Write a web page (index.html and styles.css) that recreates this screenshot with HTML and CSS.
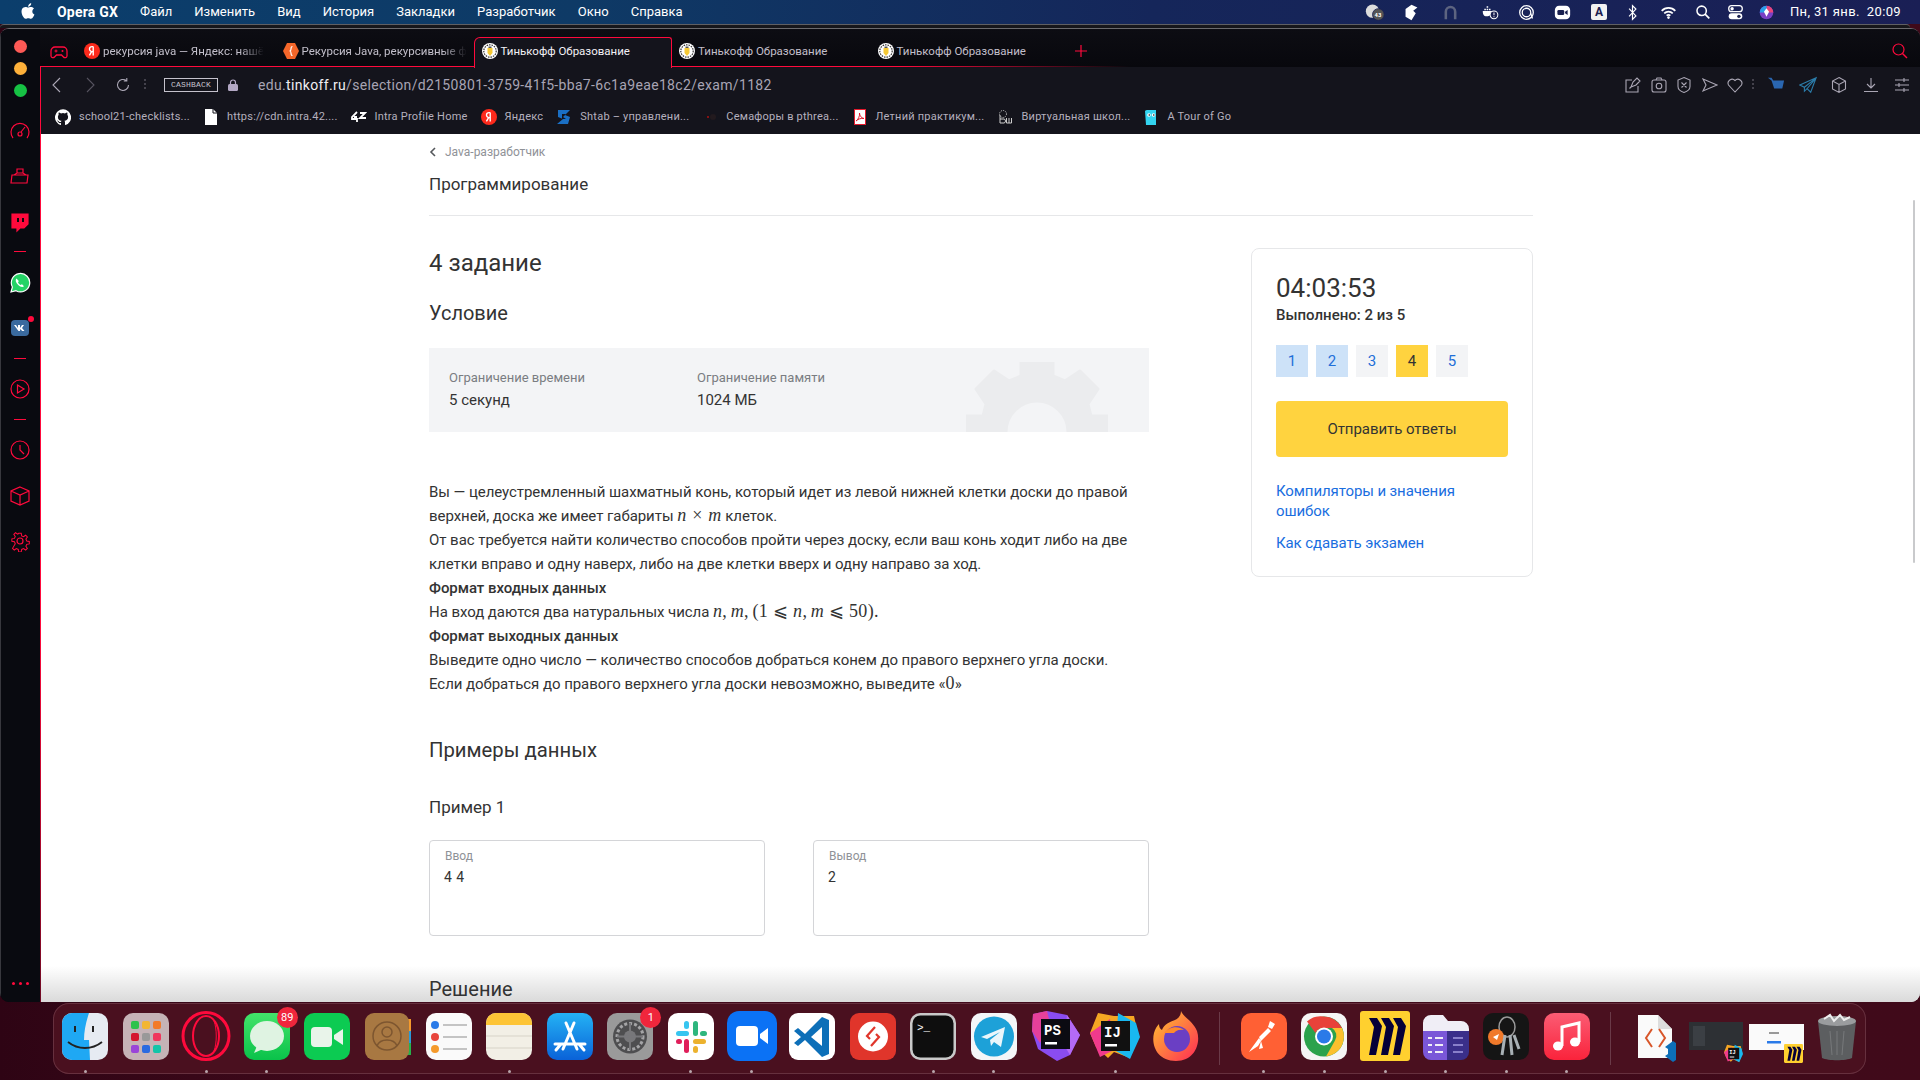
FILE: index.html
```html
<!DOCTYPE html>
<html lang="ru">
<head>
<meta charset="utf-8">
<title>Тинькофф Образование</title>
<link rel="stylesheet" href="styles.css">
</head>
<body>
<svg class="defs" width="0" height="0">
  <defs>
    <symbol id="i-ya" viewBox="0 0 16 16"><circle cx="8" cy="8" r="8" fill="#fc2a1c"/><path d="M9.2 3.6v8.8M9.2 3.6H8a2.4 2.4 0 0 0 0 5h1.2M7.6 8.6l-2.2 3.8" fill="none" stroke="#fff" stroke-width="1.4"/></symbol>
    <symbol id="i-tk" viewBox="0 0 16 16"><circle cx="8" cy="8" r="8" fill="#fff"/><circle cx="8" cy="8" r="6.200" fill="none" stroke="#333" stroke-width="1.200" stroke-dasharray="1.500 1"/><path d="M5.500 5h5v5l-2.500 3-2.500-3z" fill="#f6c935"/><path d="M6.500 3.500h3V5h-3z" fill="#555"/></symbol>
    <symbol id="i-ij" viewBox="0 0 50 50"><path d="M8 2l16 3 20 0 4 18-8 24-16-6-6 6L6 36 0 22z" fill="#f5a623"/><path d="M28 2l18 10 4 14-10 22-14-8z" fill="#19b8f0"/><path d="M0 22l10 24 16-8-6-30z" fill="#f03a8c"/><rect x="11" y="10" width="29" height="30" fill="#111"/><text x="14" y="26" class="logo-t">IJ</text><rect x="15" y="33" width="12" height="2.500" fill="#fff"/></symbol>
    <symbol id="i-miro" viewBox="0 0 50 50"><rect width="50" height="50" rx="3" fill="#ffd02f"/><path d="M9 7h8l5 8-6 29H9l5-28zM21 7h8l5 8-6 29h-7l5-28zM33 7h8l5 8-6 29h-7l5-28z" fill="#050038"/></symbol>
  </defs>
</svg>

<header class="menubar">
  <svg class="apple" viewBox="0 0 14 16" width="14" height="16"><path d="M11.300 8.500c0-2 1.600-2.900 1.700-3-1-1.400-2.400-1.600-2.900-1.600-1.200-.1-2.400.7-3 .7s-1.600-.7-2.600-.7C3.100 3.900 1.900 4.600 1.200 5.800c-1.400 2.400-.4 6 1 8 .7 1 1.500 2 2.500 2s1.400-.6 2.600-.6 1.600.6 2.600.6 1.800-1 2.400-2c.8-1.100 1.100-2.200 1.100-2.300-.1 0-2.100-.8-2.100-3zM9.400 2.600C9.900 2 10.300 1.100 10.200.2c-.8 0-1.700.5-2.300 1.200-.5.600-.9 1.500-.8 2.300.9.100 1.800-.4 2.300-1.100z" fill="#fff"/></svg>
  <nav class="menu-left">
    <b class="appname">Opera GX</b><span>Файл</span><span>Изменить</span><span>Вид</span><span>История</span><span>Закладки</span><span>Разработчик</span><span>Окно</span><span>Справка</span>
  </nav>
  <div class="menu-right">
    <span class="tray"><svg viewBox="0 0 24 20"><circle cx="9" cy="9" r="8" fill="#ddd"/><circle cx="16" cy="13" r="7" fill="#555" stroke="#1a2050"/><text x="11.500" y="16" class="tray-t">43</text></svg></span>
    <span class="tray"><svg viewBox="0 0 20 20"><path d="M3 6l7-5 7 3-5 4 3 3-5 8-7-4z" fill="#fff"/></svg></span>
    <span class="tray"><svg viewBox="0 0 20 20"><path d="M3 18V9a7 7 0 0 1 14 0v9h-3V9a4 4 0 0 0-8 0v9z" fill="#5d6480"/></svg></span>
    <span class="tray"><svg viewBox="0 0 22 20"><path d="M1 8h12c0 4-3 7-7 7s-5-3-5-7zM3 5h2v2H3zM6 5h2v2H6zM9 5h2v2H9zM6 2h2v2H6z" fill="#fff"/><circle cx="15.500" cy="13" r="5" fill="#1a2050" stroke="#fff" stroke-width="1.300"/><path d="M15.500 10v3.500M15.500 15v1" stroke="#fff" stroke-width="1.300"/></svg></span>
    <span class="tray"><svg viewBox="0 0 20 20"><circle cx="10" cy="10" r="8" fill="none" stroke="#fff" stroke-width="1.500"/><circle cx="10" cy="10" r="5" fill="none" stroke="#fff" stroke-width="1.500"/><path d="M15 11l2 6" stroke="#fff" stroke-width="1.500"/></svg></span>
    <span class="tray"><svg viewBox="0 0 20 20"><rect x="1" y="2" width="18" height="16" rx="5" fill="#fff"/><rect x="4" y="7" width="8" height="6" rx="1.500" fill="#1a2050"/><path d="M13 9l3-2v6l-3-2z" fill="#1a2050"/></svg></span>
    <span class="tray"><b class="tray-a">A</b></span>
    <span class="tray"><svg viewBox="0 0 12 20"><path d="M2 5.500l8 8.500-4 4V2l4 4-8 8.500" fill="none" stroke="#fff" stroke-width="1.400"/></svg></span>
    <span class="tray"><svg viewBox="0 0 20 20"><path d="M2 8a11 11 0 0 1 16 0M5 11a7 7 0 0 1 10 0M7.800 13.800a3.200 3.200 0 0 1 4.400 0" fill="none" stroke="#fff" stroke-width="2"/><circle cx="10" cy="16" r="1.500" fill="#fff"/></svg></span>
    <span class="tray"><svg viewBox="0 0 20 20"><circle cx="9" cy="8" r="5.500" fill="none" stroke="#fff" stroke-width="1.800"/><path d="M13 12l5 5" stroke="#fff" stroke-width="2"/></svg></span>
    <span class="tray"><svg viewBox="0 0 20 20"><rect x="2" y="2" width="16" height="7" rx="3.500" fill="none" stroke="#fff" stroke-width="1.500"/><circle cx="6" cy="5.500" r="2" fill="#fff"/><rect x="2" y="11" width="16" height="7" rx="3.500" fill="#fff"/><circle cx="14" cy="14.500" r="2" fill="#1a2050"/></svg></span>
    <span class="tray"><svg viewBox="0 0 20 20"><circle cx="10" cy="10" r="8" fill="#7a3fc4"/><path d="M10 2a8 8 0 0 1 8 8l-8 0z" fill="#e8457a"/><path d="M2 10a8 8 0 0 1 8-8l0 8z" fill="#2a9ee8"/><path d="M7 9l3-4 3 4-3 6z" fill="#fff"/></svg></span>
    <span class="clock">Пн, 31 янв.&nbsp; 20:09</span>
  </div>
</header>

<div class="backwin"></div>

<div class="window">
  <aside class="sidebar">
    <div class="lights"><i class="l-red"></i><i class="l-yel"></i><i class="l-grn"></i></div>
    <svg class="sb-ic" viewBox="0 0 22 22"><path d="M4 18a9 9 0 1 1 14 0" /><circle cx="11" cy="14" r="2"/><path d="M12 12l4-5"/></svg>
    <svg class="sb-ic" viewBox="0 0 22 22"><path d="M3 10h16l-1 8H2zM5 10l3-2h6l3 2M8 8V4h6v4"/></svg>
    <svg class="sb-ic" viewBox="0 0 22 22"><path d="M3 3h16v10l-4 4h-4l-3 3v-3H3z" fill="#ff0a3c"/><path d="M9 7v4M14 7v4" stroke="#0a0a10" stroke-width="2"/></svg>
    <i class="sb-line"></i>
    <svg class="sb-ic sb-line-after" viewBox="0 0 22 22"><path d="M2 20l1.400-5A9.200 9.200 0 1 1 7 18.700z" fill="#25d366" stroke="#fff" stroke-width="1.200"/><path d="M7.500 6.500c-1.500 1.500-.8 4 1.500 6.200s4.500 3 6 1.500l-2-2-1.500.8c-1-.5-2-1.500-2.500-2.500l.8-1.500z" fill="#fff" stroke="none"/></svg>
    <span class="vk"><svg class="sb-ic-plain" viewBox="0 0 22 22"><rect x="2" y="3" width="18" height="16" rx="4" fill="#3a6a9e"/><path d="M5 8h2l2 3V8h2v3l2-3h2l-2 3 2.500 3h-2.200L11 12v2H9.500z" fill="#fff"/></svg><i class="vk-dot"></i></span>
    <i class="sb-line"></i>
    <svg class="sb-ic sb-line-after" viewBox="0 0 22 22"><circle cx="11" cy="11" r="9"/><path d="M8.500 7l6.500 4-6.500 4z"/></svg>
    <i class="sb-line"></i>
    <svg class="sb-ic sb-line-after" viewBox="0 0 22 22"><circle cx="11" cy="11" r="9"/><path d="M11 6v5l4 4"/></svg>
    <svg class="sb-ic" viewBox="0 0 22 22"><path d="M11 2l9 4v10l-9 4-9-4V6zM2 6l9 4 9-4M11 10v10"/></svg>
    <svg class="sb-ic" viewBox="0 0 22 22"><circle cx="11" cy="11" r="3"/><path d="M9.500 2h3l.5 3 2.200 1 2.500-1.700 2 2-1.700 2.500 1 2.200 3 .5v3l-3 .5-1 2.200 1.700 2.500-2 2-2.500-1.700-2.200 1-.5 3h-3l-.5-3-2.200-1-2.500 1.700-2-2L5.500 14.200l-1-2.200-3-.5v-3l3-.5 1-2.200L3.800 3.300l2-2 2.500 1.700 .7-.4z" transform="translate(1.600 1.600) scale(.85)"/></svg>
    <div class="sb-more"><i></i><i></i><i></i></div>
  </aside>

  <div class="main">
    <div class="tabstrip">
      <svg class="gx-ic" viewBox="0 0 18 14"><path d="M5 2h8a4 4 0 0 1 4 4l0 5a2 2 0 0 1-3.500 1L11.500 10h-5L4.500 12A2 2 0 0 1 1 11V6a4 4 0 0 1 4-4z" fill="none" stroke="#ff0a3c" stroke-width="1.300"/><path d="M4.500 6h3M6 4.500v3" stroke="#ff0a3c"/><circle cx="12.500" cy="6" r="1" fill="#ff0a3c"/></svg>
      <div class="tab"><svg class="fav"><use href="#i-ya"/></svg><span class="tab-t tab-fade">рекурсия java — Яндекс: нашё</span></div>
      <div class="tab tab-2"><svg class="fav" viewBox="0 0 16 16"><path d="M4 0h8l4 8-4 8H4L0 8z" fill="#f5672a"/><path d="M9.500 3.500C8 3.500 8 4.500 8 6s-.5 2-1.500 2c1 0 1.500.5 1.500 2s0 2.500 1.500 2.500" fill="none" stroke="#fff" stroke-width="1.200"/></svg><span class="tab-t tab-fade">Рекурсия Java, рекурсивные ф</span></div>
      <div class="tab tab-active"><svg class="fav"><use href="#i-tk"/></svg><span class="tab-t">Тинькофф Образование</span></div>
      <div class="tab"><svg class="fav"><use href="#i-tk"/></svg><span class="tab-t">Тинькофф Образование</span></div>
      <div class="tab"><svg class="fav"><use href="#i-tk"/></svg><span class="tab-t">Тинькофф Образование</span></div>
      <svg class="tab-plus" viewBox="0 0 12 12"><path d="M6 0v12M0 6h12" stroke="#ff0a3c" stroke-width="1.200"/></svg>
      <svg class="tab-search" viewBox="0 0 16 16"><circle cx="6.500" cy="6.500" r="5.500" fill="none" stroke="#ff0a3c" stroke-width="1.200"/><path d="M10.500 10.500L15 15" stroke="#ff0a3c" stroke-width="1.400"/></svg>
    </div>

    <div class="content">
      <div class="toolbar">
        <svg class="tb-back" viewBox="0 0 12 16"><path d="M9 1L2 8l7 7" class="tb-s"/></svg>
        <svg class="tb-fwd" viewBox="0 0 12 16"><path d="M3 1l7 7-7 7" class="tb-s tb-dim"/></svg>
        <svg class="tb-reload" viewBox="0 0 16 16"><path d="M13.500 8a5.500 5.500 0 1 1-2-4.300M11.800 1v3h-3" class="tb-s"/></svg>
        <span class="tb-sep"></span>
        <span class="cashback">CASHBACK</span>
        <svg class="tb-lock" viewBox="0 0 10 12"><path d="M2.500 5V3.500a2.500 2.500 0 0 1 5 0V5" fill="none" stroke="#b3a8c4" stroke-width="1.200"/><rect y="5" width="10" height="7" rx="1.500" fill="#b3a8c4"/></svg>
        <span class="url">edu.<b>tinkoff.ru</b>/selection/d2150801-3759-41f5-bba7-6c1a9eae18c2/exam/1182</span>
        <div class="tb-right">
          <svg class="tb-i" viewBox="0 0 18 18"><path d="M8 4H2v12h12v-6M7 11l2-5 4-4 3 3-4 4zM7 11l-1.500 1.500" class="tb-s"/></svg>
          <svg class="tb-i" viewBox="0 0 18 18"><rect x="2" y="4" width="14" height="12" rx="2" class="tb-s"/><circle cx="9" cy="10" r="2.800" class="tb-s"/><path d="M6 4l1-2h4l1 2" class="tb-s"/></svg>
          <svg class="tb-i" viewBox="0 0 18 18"><path d="M9 1.500l6 2.500v6.500c0 3-3 5-6 6-3-1-6-3-6-6V4zM6.500 6.500l5 5M11.500 6.500l-5 5" class="tb-s"/></svg>
          <svg class="tb-i" viewBox="0 0 18 18"><path d="M2 3l14 6-14 6 3-6z" class="tb-s"/></svg>
          <svg class="tb-i" viewBox="0 0 18 18"><path d="M9 16L2.500 9A4 4 0 0 1 9 4.500 4 4 0 0 1 15.500 9z" class="tb-s"/></svg>
          <span class="tb-sep tb-sep-r"></span>
          <svg class="tb-i tb-w" viewBox="0 0 20 18"><path d="M1 1h4l2 3h12l-2 9H8L5 4z" fill="#2a66b0"/></svg>
          <svg class="tb-i tb-w" viewBox="0 0 20 18"><path d="M19 1L1 9l5 2.500L19 1l-10 12 4 4zM6 11.500V16l3-3" fill="none" stroke="#2b7ba8" stroke-width="1.200"/></svg>
          <svg class="tb-i tb-w" viewBox="0 0 18 18"><path d="M9 1.500l6.500 3.500v8L9 16.500 2.500 13V5zM2.500 5L9 8.500 15.500 5M9 8.500v8" class="tb-s"/></svg>
          <svg class="tb-i tb-w" viewBox="0 0 18 18"><path d="M9 2v10M5 8l4 4 4-4M2 15.500h14" class="tb-s"/></svg>
          <svg class="tb-i tb-w" viewBox="0 0 18 18"><path d="M2 4h14M2 9h14M2 14h14" class="tb-s"/><path d="M11 2v4M6 7v4M11 12v4" class="tb-s"/></svg>
        </div>
      </div>

      <div class="bookmarks">
        <span class="bm"><svg class="bm-i" viewBox="0 0 16 16"><path d="M8 .3a8 8 0 0 0-2.500 15.600c.4.1.5-.2.5-.4v-1.400c-2.200.5-2.700-1-2.700-1-.4-.9-.9-1.200-.9-1.200-.7-.5.100-.5.100-.5.800.1 1.200.8 1.200.8.700 1.200 1.900.9 2.300.7.100-.5.300-.9.500-1.100-1.800-.2-3.600-.9-3.600-4 0-.9.300-1.600.8-2.100-.1-.2-.4-1 .1-2.100 0 0 .7-.2 2.200.8a7.500 7.500 0 0 1 4 0c1.500-1 2.200-.8 2.200-.8.400 1.100.2 1.900.1 2.100.5.600.8 1.300.8 2.100 0 3.100-1.900 3.800-3.700 4 .3.300.6.800.6 1.500v2.200c0 .2.100.5.600.4A8 8 0 0 0 8 .3z" fill="#fff"/></svg>school21-checklists...</span>
        <span class="bm"><svg class="bm-i" viewBox="0 0 16 16"><path d="M2 0h8l4 4v12H2z" fill="#fff"/><path d="M10 0v4h4" fill="none" stroke="#14141c"/></svg>https://cdn.intra.42....</span>
        <span class="bm"><svg class="bm-i" viewBox="0 0 16 16"><path d="M6 3L1 8v2h5v3M6 8H3M9 4h5l-5 5h6" fill="none" stroke="#fff" stroke-width="1.800"/></svg>Intra Profile Home</span>
        <span class="bm"><svg class="bm-i"><use href="#i-ya"/></svg>Яндекс</span>
        <span class="bm"><svg class="bm-i" viewBox="0 0 16 16"><path d="M2 1h12L9 6l5 2-2 7H1l6-5-5-2z" fill="#1a6fc4"/><path d="M6 5h4l-3 3 3 2H6" fill="#14141c"/></svg>Shtab – управлени...</span>
        <span class="bm"><svg class="bm-i" viewBox="0 0 16 16"><circle cx="6" cy="8" r="1" fill="#a11"/><circle cx="11" cy="8" r="3" fill="#221a1e"/></svg>Семафоры в pthrea...</span>
        <span class="bm"><svg class="bm-i" viewBox="0 0 16 16"><rect x="2.500" y=".5" width="11" height="15" fill="#fff" stroke="#e31b2d"/><path d="M4 12c2-1 4-5 3.500-8 0 3 2 5 4.500 5.500-3-.5-6 .5-8 2.500z" fill="none" stroke="#e31b2d"/></svg>Летний практикум...</span>
        <span class="bm"><svg class="bm-i" viewBox="0 0 16 16"><circle cx="6" cy="5" r="3.500" fill="none" stroke="#ccc" stroke-dasharray="1 1"/><path d="M3 6v8h4c2 0 2-4 0-4H3M9.500 9v5h5V9M12 9v5" fill="none" stroke="#ccc"/></svg>Виртуальная школ...</span>
        <span class="bm"><svg class="bm-i" viewBox="0 0 16 16"><path d="M2 2a3 3 0 0 1 3-1h8v15H3z" fill="#33d4f0"/><circle cx="6" cy="6" r="1.800" fill="#fff"/><circle cx="10.500" cy="6" r="1.800" fill="#fff"/><circle cx="6.300" cy="6" r=".8" fill="#111"/><circle cx="10.800" cy="6" r=".8" fill="#111"/></svg>A Tour of Go</span>
      </div>

      <main class="page">
        <div class="page-in">
          <div class="crumb"><svg class="crumb-i" viewBox="0 0 8 10"><path d="M6 1L2 5l4 4" fill="none" stroke="#55585c" stroke-width="1.600"/></svg>Java-разработчик</div>
          <div class="prog">Программирование</div>
          <div class="cols">
            <section class="task">
              <h1 class="h-task">4 задание</h1>
              <h2 class="h-sec h-cond">Условие</h2>
              <div class="limits">
                <div class="lim"><div class="lim-l">Ограничение времени</div><div class="lim-v">5 секунд</div></div>
                <div class="lim"><div class="lim-l">Ограничение памяти</div><div class="lim-v">1024 МБ</div></div>
                <svg class="gear" viewBox="0 0 142 70"><path d="M55 0h32v14l12 5 15-10 18 18-10 15 3 12h17v16H102a31 31 0 0 0-62 0H0V54h17l3-12L10 27 28 9l15 10 12-5z" fill="#ebecee" stroke="#ebecee" stroke-width="3" stroke-linejoin="round"/></svg>
              </div>
              <div class="statement">
                <div>Вы — целеустремленный шахматный конь, который идет из левой нижней клетки доски до правой<br>верхней, доска же имеет габариты <span class="m">n</span> <span class="mo mo-x">×</span> <span class="m">m</span> клеток.</div>
                <div>От вас требуется найти количество способов пройти через доску, если ваш конь ходит либо на две<br>клетки вправо и одну наверх, либо на две клетки вверх и одну направо за ход.</div>
                <div class="st-b">Формат входных данных</div>
                <div>На вход даются два натуральных числа <span class="m">n</span><span class="mo">,</span> <span class="m">m</span><span class="mo">,</span> <span class="mo">(1 ⩽ </span><span class="m">n</span><span class="mo">,</span> <span class="m">m</span><span class="mo"> ⩽ 50).</span></div>
                <div class="st-b">Формат выходных данных</div>
                <div>Выведите одно число — количество способов добраться конем до правого верхнего угла доски.</div>
                <div>Если добраться до правого верхнего угла доски невозможно, выведите «<span class="mo">0</span>»</div>
              </div>
              <h2 class="h-sec h-ex">Примеры данных</h2>
              <h3 class="h-ex1">Пример 1</h3>
              <div class="samples">
                <div class="sample"><div class="s-l">Ввод</div><div class="s-v">4 4</div></div>
                <div class="sample"><div class="s-l">Вывод</div><div class="s-v">2</div></div>
              </div>
              <h2 class="h-sec h-sol">Решение</h2>
            </section>
            <aside class="card">
              <div class="timer">04:03:53</div>
              <div class="done">Выполнено: 2 из 5</div>
              <div class="nums"><span class="n n-done">1</span><span class="n n-done">2</span><span class="n">3</span><span class="n n-cur">4</span><span class="n">5</span></div>
              <div class="send">Отправить ответы</div>
              <a class="lnk lnk-1">Компиляторы и значения ошибок</a>
              <a class="lnk lnk-2">Как сдавать экзамен</a>
            </aside>
          </div>
        </div>
        <div class="scroll-thumb"></div>
        <div class="page-fade"></div>
      </main>
    </div>
  </div>
</div>

<footer class="dock-wrap">
  <div class="dock">
    <div class="app run"><svg viewBox="0 0 46 47"><rect width="46" height="47" rx="10" fill="#e6ebf2"/><path d="M10 0h17c-3 9-5 18-5 27h5l1 20H10A10 10 0 0 1 0 37V10A10 10 0 0 1 10 0z" fill="#1fa8f4"/><path d="M13 13v6M31 13v6" stroke="#222" stroke-width="2"/><path d="M6 29c10 8 24 8 34 0" fill="none" stroke="#222" stroke-width="1.800"/></svg></div>
    <div class="app"><svg viewBox="0 0 46 47"><rect width="46" height="47" rx="10" fill="#c5b3b6"/><g><rect x="8" y="8" width="8" height="8" rx="2" fill="#2fc24d"/><rect x="19" y="8" width="8" height="8" rx="2" fill="#f2b632"/><rect x="30" y="8" width="8" height="8" rx="2" fill="#f27a2a"/><rect x="8" y="20" width="8" height="8" rx="2" fill="#d4152f"/><rect x="19" y="20" width="8" height="8" rx="2" fill="#999"/><rect x="30" y="20" width="8" height="8" rx="2" fill="#f0365c"/><rect x="8" y="32" width="8" height="8" rx="2" fill="#9a45d8"/><rect x="19" y="32" width="8" height="8" rx="2" fill="#2a6ae0"/><rect x="30" y="32" width="8" height="8" rx="2" fill="#12c4a8"/></g></svg></div>
    <div class="app run app-big"><svg viewBox="0 0 50 50"><ellipse cx="25" cy="25" rx="23" ry="23.500" fill="none" stroke="#ff0a3c" stroke-width="3"/><ellipse cx="25" cy="25" rx="13" ry="20" fill="none" stroke="#ff0a3c" stroke-width="2"/><path d="M33 10c3 8 3 22 0 30" fill="none" stroke="#ff0a3c"/></svg></div>
    <div class="app run"><svg viewBox="0 0 46 47"><defs><linearGradient id="g-m" x1="0" y1="0" x2="0" y2="1"><stop offset="0" stop-color="#43e36a"/><stop offset="1" stop-color="#0ac24a"/></linearGradient></defs><rect width="46" height="47" rx="10" fill="url(#g-m)"/><ellipse cx="23" cy="23" rx="17" ry="15" fill="#dff3e2"/><path d="M13 33l-3 7 9-4z" fill="#dff3e2"/></svg><b class="badge">89</b></div>
    <div class="app"><svg viewBox="0 0 46 47"><rect width="46" height="47" rx="10" fill="#0ccb52"/><rect x="7" y="14" width="21" height="20" rx="4" fill="#e9f4ea"/><path d="M30 22l9-6v16l-9-6z" fill="#e9f4ea"/></svg></div>
    <div class="app"><svg viewBox="0 0 46 47"><rect x="40" y="6" width="6" height="12" fill="#f59a2c"/><rect x="40" y="18" width="6" height="12" fill="#2a9ad8"/><rect x="40" y="30" width="6" height="12" fill="#27b24a"/><rect width="44" height="47" rx="9" fill="#a87842"/><circle cx="22" cy="23" r="14" fill="none" stroke="#7d5630" stroke-width="1.500"/><circle cx="22" cy="19" r="5" fill="none" stroke="#7d5630" stroke-width="1.500"/><path d="M12 33c3-8 17-8 20 0" fill="none" stroke="#7d5630" stroke-width="1.500"/></svg></div>
    <div class="app"><svg viewBox="0 0 46 47"><rect width="46" height="47" rx="10" fill="#fafafa"/><circle cx="9" cy="12" r="4" fill="#2a7ae8"/><circle cx="9" cy="24" r="4" fill="#e8453c"/><circle cx="9" cy="36" r="4" fill="#f59a2c"/><path d="M17 12h24M17 24h24M17 36h24" stroke="#c4c4c4" stroke-width="1.800"/></svg></div>
    <div class="app run"><svg viewBox="0 0 46 47"><rect width="46" height="47" rx="10" fill="#f2efe6"/><path d="M0 12V10A10 10 0 0 1 10 0h26a10 10 0 0 1 10 10v2z" fill="#fdc436"/><path d="M0 23h46M0 35h46" stroke="#d7d3c8"/></svg></div>
    <div class="app"><svg viewBox="0 0 46 47"><defs><linearGradient id="g-a" x1="0" y1="0" x2="0" y2="1"><stop offset="0" stop-color="#24b2f4"/><stop offset="1" stop-color="#0a62d8"/></linearGradient></defs><rect width="46" height="47" rx="10" fill="url(#g-a)"/><path d="M16 36L27 10M30 36L19 10M8 31h30M32 31l5 6M14 31l-5 6" stroke="#fff" stroke-width="3" stroke-linecap="round"/></svg></div>
    <div class="app"><svg viewBox="0 0 46 47"><rect width="46" height="47" rx="10" fill="#9a9a9a"/><circle cx="23" cy="23.500" r="17" fill="#4e4e50"/><circle cx="23" cy="23.500" r="13" fill="none" stroke="#a4a4a6" stroke-width="3" stroke-dasharray="3 2"/><circle cx="23" cy="23.500" r="6" fill="#77777a"/><path d="M23 10v27M10 23.500h26" stroke="#77777a" stroke-width="2"/></svg><b class="badge">1</b></div>
    <div class="app run"><svg viewBox="0 0 46 47"><rect width="46" height="47" rx="10" fill="#fff"/><rect x="8" y="18" width="13" height="5" rx="2.500" fill="#36c5f0"/><rect x="16" y="8" width="5" height="8" rx="2.500" fill="#36c5f0"/><rect x="25" y="8" width="5" height="15" rx="2.500" fill="#2eb67d"/><rect x="32" y="18" width="7" height="5" rx="2.500" fill="#2eb67d"/><rect x="25" y="26" width="13" height="5" rx="2.500" fill="#ecb22e"/><rect x="25" y="33" width="5" height="7" rx="2.500" fill="#ecb22e"/><rect x="16" y="26" width="5" height="14" rx="2.500" fill="#e01e5a"/><rect x="8" y="26" width="6" height="5" rx="2.500" fill="#e01e5a"/></svg></div>
    <div class="app run app-big"><svg viewBox="0 0 50 50"><rect width="50" height="50" rx="12" fill="#0b72f5"/><rect x="9" y="15" width="22" height="20" rx="4" fill="#fff"/><path d="M33 23l8-6v16l-8-6z" fill="#fff"/></svg></div>
    <div class="app"><svg viewBox="0 0 46 47"><rect width="46" height="47" rx="9" fill="#fff"/><path d="M33 4L16 21 9 15l-4 3 7 6-7 6 4 3 7-6 17 17 7-3V7z" fill="#0d6fb8"/><path d="M33 14L22 24l11 9z" fill="#fff"/></svg></div>
    <div class="app"><svg viewBox="0 0 46 47"><rect width="46" height="47" rx="9" fill="#e0352b"/><circle cx="23" cy="23.500" r="15" fill="#fff"/><path d="M25 14l-8 9 3 3M21 33l8-9-3-3" fill="none" stroke="#e0352b" stroke-width="2.200"/></svg></div>
    <div class="app run"><svg viewBox="0 0 46 47"><rect width="46" height="47" rx="10" fill="#c9c9c9"/><rect x="2.500" y="2.500" width="41" height="42" rx="8" fill="#0e0e0e"/><text x="7" y="18" class="term-t">&gt;_</text></svg></div>
    <div class="app run"><svg viewBox="0 0 46 47"><rect width="46" height="47" rx="10" fill="#f4f6f8"/><circle cx="23" cy="23.500" r="20" fill="#1da1d8"/><path d="M10 24l24-10-4 20-7-5-3 4-1-6 10-8-13 7z" fill="#eaf6fb"/></svg></div>
    <div class="app app-big"><svg viewBox="0 0 50 50"><path d="M3 3l14-3 20 4 13 20-10 20-13 6L8 38 2 20z" fill="#8a4cf0"/><path d="M3 3l14-3 3 12-10 20-8-12z" fill="#e6409a"/><path d="M37 4l13 20-10 20-6-10z" fill="#b46af5"/><rect x="11" y="8" width="29" height="30" fill="#0b0b12"/><text x="14" y="24" class="logo-t">PS</text><rect x="15" y="31" width="12" height="2.500" fill="#fff"/></svg></div>
    <div class="app run app-big"><svg><use href="#i-ij"/></svg></div>
    <div class="app app-big"><svg viewBox="0 0 50 50"><defs><linearGradient id="g-f" x1="0" y1="0" x2="1" y2="1"><stop offset="0" stop-color="#ffc72e"/><stop offset="1" stop-color="#ff2a55"/></linearGradient></defs><path d="M30 0c2 6 12 10 16 20 4 12-2 30-21 30S0 34 3 22c1-4 3-7 5-9 0 3 1 5 3 6 2-6 8-8 13-10 4-2 6-5 6-9z" fill="url(#g-f)"/><circle cx="26" cy="28" r="13" fill="#6a3fc4"/><path d="M13 22c4-6 14-8 20-3-6-1-8 1-10 3z" fill="#ff8a2a"/></svg></div>
    <i class="dock-sep"></i>
    <div class="app run"><svg viewBox="0 0 46 47"><rect width="46" height="47" rx="10" fill="#ff6034"/><path d="M29 8l5 3-3 5-4-2zM27 15l3 3-10 10-2-4zM18 25l-8 11-2 3 9-6 3-5zM20 28l2 7-4 1" fill="#fff"/></svg></div>
    <div class="app run"><svg viewBox="0 0 46 47"><rect width="46" height="47" rx="10" fill="#f5f5f5"/><circle cx="23" cy="23.500" r="20" fill="#2ba24c"/><path d="M23 3.500a20 20 0 0 1 18 11.500H23a9 9 0 0 0-8.500 5L6 8.500A20 20 0 0 1 23 3.500z" fill="#e8423a"/><path d="M41 15a20 20 0 0 1-16 28.500l9-16a9 9 0 0 0-3-12.500z" fill="#fbc02d"/><circle cx="23" cy="23.500" r="9" fill="#fff"/><circle cx="23" cy="23.500" r="7" fill="#2a7ae8"/></svg></div>
    <div class="app run app-big"><svg><use href="#i-miro"/></svg></div>
    <div class="app run"><svg viewBox="0 0 46 47"><path d="M0 10a8 8 0 0 1 8-8h12l5 6h13a8 8 0 0 1 8 8v4H0z" fill="#f0eef6"/><path d="M0 18h24v29H8a8 8 0 0 1-8-8z" fill="#7a57d8"/><path d="M24 18h22v21a8 8 0 0 1-8 8H24z" fill="#3a2f8a"/><path d="M5 25h4M12 25h8M5 32h4M12 32h8M5 39h4M12 39h8" stroke="#f0eef6" stroke-width="2"/><path d="M30 25h10M30 32h10M30 39h10" stroke="#a49ce0" stroke-width="1.600"/></svg></div>
    <div class="app run"><svg viewBox="0 0 46 47"><rect width="46" height="47" rx="10" fill="#151515"/><ellipse cx="24" cy="14" rx="8" ry="10" fill="none" stroke="#9a9a9a" stroke-width="1.500"/><circle cx="13" cy="24" r="8" fill="#f0792a"/><path d="M10 24l6-3-2 6z" fill="#fff"/><path d="M22 22l-3 20M27 22l2 20M31 22l5 14" stroke="#a8b0b4" stroke-width="3"/></svg></div>
    <div class="app run"><svg viewBox="0 0 46 47"><defs><linearGradient id="g-mu" x1="0" y1="0" x2="0" y2="1"><stop offset="0" stop-color="#fb5c74"/><stop offset="1" stop-color="#fa233b"/></linearGradient></defs><rect width="46" height="47" rx="10" fill="url(#g-mu)"/><path d="M18 33V14l17-4v19" fill="none" stroke="#fff" stroke-width="3"/><ellipse cx="14" cy="33" rx="5" ry="4.500" fill="#fff"/><ellipse cx="31" cy="29" rx="5" ry="4.500" fill="#fff"/></svg></div>
    <i class="dock-sep"></i>
    <div class="app"><svg viewBox="0 0 46 47"><path d="M6 2h20l14 14v29H6z" fill="#fafafa"/><path d="M26 2v14h14" fill="#ddd"/><path d="M20 16l-6 9 6 9M27 16l6 9-6 9" fill="none" stroke="#d8562a" stroke-width="2"/><path d="M44 30l-8 6-3-2 8-6zM44 47l-8-6-3 2 8 6zM36 36v5l8 6V30z" fill="#0d6fb8"/></svg></div>
    <div class="app"><svg viewBox="0 0 46 47"><rect x="-4" y="9" width="54" height="28" fill="#2d3034"/><rect x="0" y="13" width="12" height="20" fill="#3b3f44"/></svg><svg class="mini"><use href="#i-ij"/></svg></div>
    <div class="app"><svg viewBox="0 0 46 47"><rect x="-4" y="11" width="55" height="26" fill="#fafafa"/><rect x="16" y="19" width="10" height="2" fill="#999"/><rect x="14" y="28" width="14" height="2.500" fill="#2a7ae8"/></svg><svg class="mini"><use href="#i-miro"/></svg></div>
    <div class="app"><svg viewBox="0 0 46 47"><path d="M4 8h38l-4 37c-6 3-24 3-30 0z" fill="#5c5e60"/><ellipse cx="23" cy="8" rx="19" ry="5" fill="#9a9c9e"/><path d="M10 6l6-4 4 6 6-6 4 5 6-3" fill="none" stroke="#eee" stroke-width="2"/><path d="M16 18l2 24M23 18v24M30 18l-2 24" stroke="#77797b"/></svg></div>
  </div>
</footer>
</body>
</html>
```
FILE: styles.css
```css
* { box-sizing: border-box; }
html, body { margin: 0; height: 100%; }
body {
  width: 1920px; height: 1080px; overflow: hidden;
  display: flex; flex-direction: column;
  background: linear-gradient(90deg, #2e0414 0, #420a1c 20%, #400a1a 100%);
  font-family: Roboto, "Noto Sans", sans-serif;
  color: #333;
}
.defs { position: absolute; }
i { display: block; font-style: normal; }

/* menu bar */
.menubar {
  height: 24px; flex: none; display: flex; align-items: center;
  padding-left: 21px; color: #fff;
  background: linear-gradient(90deg, #0b3e6c 0, #0e3a66 30%, #15265a 60%, #1a1f55 100%);
  font: 13px/24px Roboto, sans-serif;
}
.apple { flex: none; margin-top: -2px; }
.menu-left { display: flex; gap: 22.100px; margin-left: 22px; }
.appname { font-weight: 700; font-size: 14px; letter-spacing: .2px; }
.menu-right { margin-left: auto; display: flex; align-items: center; padding-right: 19px; }
.tray { width: 20px; height: 20px; margin-right: 16px; display: flex; align-items: center; justify-content: center; }
.tray svg { width: 17px; height: 17px; }
.tray:nth-child(1) svg { width: 21px; height: 20px; }
.tray:nth-child(1) { margin-right: 17px; }
.tray:nth-child(2) { margin-right: 19px; }
.tray:nth-child(3) { margin-right: 20px; }
.tray:nth-child(7) { margin-right: 14px; }
.tray:nth-child(9) { margin-right: 14px; }
.tray:nth-child(10) { margin-right: 13px; }
.tray:nth-child(11) { margin-right: 11px; }
.tray:nth-child(12) { margin-right: 13px; }
.tray-t { font: 700 7px Roboto, sans-serif; fill: #fff; }
.tray-a { width: 16px; height: 16px; border-radius: 2px; background: #f2f2f2; color: #1a2050; font: 700 12px/16px Roboto, sans-serif; text-align: center; }
.clock { white-space: nowrap; letter-spacing: .35px; }

.backwin { height: 4px; flex: none; background: #17171b; border-top: 1px solid #5f5f63; border-radius: 6px 6px 0 0; margin: 0 10px 0 0; }

/* window */
.window {
  flex: 1; min-height: 0; display: flex; overflow: hidden;
  border-radius: 9px; border-top: 1px solid #6a6a6e;
  background: #0a0a10;
}
.sidebar {
  width: 40px; flex: none; display: flex; flex-direction: column; align-items: center;
  padding: 11px 0 17px;
  background: #090a10; box-shadow: inset 1px 0 0 #38383e;
}
.lights i { width: 13px; height: 13px; border-radius: 50%; margin-bottom: 9px; }
.lights { height: 56px; }
.l-red { background: #fd5a56; } .l-yel { background: #fdb03a; } .l-grn { background: #16c244; }
.sb-ic { width: 22px; height: 22px; flex: none; margin-top: 23.500px; fill: none; stroke: #ff0a3c; stroke-width: 1.200; }
.sb-ic-plain { width: 22px; height: 22px; display: block; }
.sb-line { width: 12px; height: 1px; background: #ff0a3c; margin-top: 18.500px; flex: none; }
.sb-ic.sb-line-after { margin-top: 19.500px; }
.vk { position: relative; margin-top: 23.500px; height: 22px; }
.vk-dot { position: absolute; right: -3px; top: -1px; width: 6px; height: 6px; border-radius: 50%; background: #ff0a3c; }
.sb-more { margin-top: auto; display: flex; gap: 4px; }
.sb-more i { width: 3px; height: 3px; border-radius: 50%; background: #ff0a3c; }

.main { flex: 1; min-width: 0; display: flex; flex-direction: column; }
.tabstrip {
  height: 38px; flex: none; display: flex; align-items: flex-end; position: relative;
  padding-left: 10px;
  font: 11.500px/28px Roboto, sans-serif; color: #c2bfca;
  background: linear-gradient(#0d0d13, #08080d);
}
.tabstrip::after {
  content: ""; position: absolute; left: 0; right: 0; bottom: 0; height: 1px;
  background: linear-gradient(90deg, #ff0a3c 0, #ff0a3c 434px, transparent 434px, transparent 631px, #ff0a3c 631px, #ff0a3c 860px, transparent 1090px);
}
.gx-ic { width: 18px; height: 14px; flex: none; margin: 0 9px 8px 0; }
.tab { width: 198.500px; flex: none; height: 30px; display: flex; align-items: center; padding: 0 0 2px 7px; position: relative; }
.tab-2 { width: 198px; }
.fav { width: 16px; height: 16px; flex: none; margin-right: 3px; }
.tab-t { white-space: nowrap; }
.tab-fade { -webkit-mask-image: linear-gradient(90deg, #000 85%, transparent 100%); mask-image: linear-gradient(90deg, #000 85%, transparent 100%); }
.tab-active {
  color: #f2f0f5; background: #14141c; z-index: 1;
  border: 1px solid #ff0a3c; border-bottom: 0; border-radius: 6px 3px 0 0;
  padding: 0 0 4px 7px; height: 31px; margin-bottom: -1px;
}
.tab-plus { width: 12px; height: 12px; flex: none; margin: 0 0 10px 6px; }
.tab-search { width: 16px; height: 16px; position: absolute; right: 12px; top: 14px; }

.content { flex: 1; min-height: 0; display: flex; flex-direction: column; border-left: 1px solid #ff0a3c; border-image: linear-gradient(#ff0a3c 0, #ff0a3c 60%, #700a24 100%) 1; }
.toolbar {
  height: 36px; flex: none; display: flex; align-items: center; background: #14141c;
  padding: 0 9px 0 10px; color: #a8a4b4; position: relative;
}
.tb-s { fill: none; stroke: #aaa6b4; stroke-width: 1.100; }
.tb-dim { stroke: #55525e; }
.tb-back, .tb-fwd { width: 12px; height: 16px; flex: none; }
.tb-fwd { margin-left: 21px; }
.tb-reload { width: 16px; height: 16px; flex: none; margin-left: 19px; }
.tb-sep { width: 2px; height: 12px; flex: none; margin-left: 13px; background: repeating-linear-gradient(#44424c 0 2px, transparent 2px 4px); }
.tb-right .tb-sep-r { margin-left: 0; }
.cashback { width: 54px; height: 14px; flex: none; margin-left: 18px; border: 1px solid #c5c2cc; color: #c5c2cc; font: 500 8px/12px "Liberation Mono", monospace; text-align: center; letter-spacing: .2px; }
.tb-lock { width: 10px; height: 12px; flex: none; margin-left: 10px; }
.url { margin-left: 20px; font: 14px/20px Roboto, sans-serif; white-space: nowrap; letter-spacing: .33px; color: #a8a4b4; }
.url b { font-weight: 400; color: #f0eef3; }
.tb-right { margin-left: auto; display: flex; align-items: center; gap: 7.500px; }
.tb-i { width: 18px; height: 18px; flex: none; }
.tb-w { margin-left: 6px; }

.bookmarks {
  height: 31px; flex: none; display: flex; align-items: center; gap: 13px;
  padding: 0 0 4px 14px; background: #14141c; color: #b4b0be;
  font: 11px/16px Roboto, sans-serif; white-space: nowrap; letter-spacing: .22px;
}
.bm { display: flex; align-items: center; gap: 8px; flex: none; }
.bm-i { width: 16px; height: 16px; flex: none; }

.page { flex: 1; min-height: 0; background: #fff; position: relative; overflow: hidden; }
.page-in { width: 1104px; margin-left: 388px; position: relative; z-index: 1; }
.crumb { height: 20px; margin-top: 8px; font-size: 12px; line-height: 20px; color: #8f9297; display: flex; align-items: center; }
.crumb-i { width: 8px; height: 10px; flex: none; margin: 0 8px 0 0; }
.prog { margin-top: 10px; font-size: 17px; line-height: 24px; padding-bottom: 19px; border-bottom: 1px solid #e6e7e9; color: #333; }
.cols { display: grid; grid-template-columns: 720px 282px; column-gap: 102px; align-items: start; }
.h-task { margin: 31px 0 0; font-size: 24px; line-height: 32px; font-weight: 400; color: #333; }
.h-sec { margin: 0; font-size: 20px; line-height: 28px; font-weight: 400; color: #333; }
.h-cond { margin-top: 20px; }
.limits { margin-top: 21px; height: 84px; padding: 20px; display: flex; background: #f3f4f6; position: relative; overflow: hidden; }
.lim { width: 248px; }
.lim-l { font-size: 13px; line-height: 20px; color: #7a7d82; }
.lim-v { font-size: 15px; line-height: 24px; color: #333; }
.gear { position: absolute; left: 537px; top: 14px; width: 142px; height: 70px; }
.statement { margin-top: 48px; font-size: 15px; line-height: 24px; letter-spacing: -.05px; color: #333; white-space: nowrap; }
.st-b { font-weight: 500; }
.m { font-family: "Liberation Serif", serif; font-style: italic; font-size: 18px; line-height: 0; letter-spacing: .3px; }
.mo { font-family: "Liberation Serif", "DejaVu Serif", serif; font-size: 18px; line-height: 0; letter-spacing: .3px; }
.mo-x { margin: 0 2px; }
.h-sec.h-ex { margin-top: 40px; font-size: 20.300px; }
.h-ex1 { margin: 31px 0 0; font-size: 17px; line-height: 24px; font-weight: 400; color: #333; }
.samples { margin-top: 21px; display: grid; grid-template-columns: 336px 336px; column-gap: 48px; }
.sample { height: 96px; border: 1px solid #d4d5d8; border-radius: 4px; padding: 6px 15px; }
.s-l { font-size: 12px; line-height: 18px; color: #8f9297; }
.s-v { margin: 2px 0 0 -1px; font-size: 14px; line-height: 20px; letter-spacing: .5px; color: #333; }
.h-sol { margin-top: 39px; }

.card { margin-top: 32px; border: 1px solid #e6e7e9; border-radius: 8px; padding: 23px 24px; background: #fff; }
.timer { font-size: 26px; line-height: 32px; color: #333; }
.done { margin-top: 1px; font-size: 15px; line-height: 20px; font-weight: 500; color: #333; }
.nums { margin-top: 20px; display: flex; gap: 8px; }
.n { width: 32px; height: 32px; font-size: 15px; line-height: 32px; text-align: center; color: #1f6fd8; background: #f3f4f6; }
.n-done { background: #cde2f8; }
.n-cur { background: #ffd33f; color: #333; }
.send { margin-top: 24px; height: 56px; border-radius: 4px; background: #ffd33f; text-align: center; font-size: 15px; line-height: 56px; letter-spacing: -.05px; color: #333; }
.lnk { display: block; font-size: 15px; line-height: 20px; letter-spacing: -.1px; color: #1a6ee0; }
.lnk-1 { margin-top: 24px; }
.lnk-2 { margin-top: 12px; }

.scroll-thumb { position: absolute; right: 5px; top: 66px; width: 2px; height: 363px; background: #c9cacc; border-radius: 1px; }
.page-fade { position: absolute; left: 0; right: 0; bottom: 0; height: 36px; background: linear-gradient(rgba(220,220,220,0), #dadada); }

/* dock */
.dock-wrap { height: 78px; flex: none; padding: 1px 54px 6px 53px; }
.dock {
  height: 71px; display: flex; align-items: flex-start; gap: 14.600px;
  padding: 10px 0 0 9px; border-radius: 16px;
  background: #4a101f; box-shadow: inset 0 0 0 1px #66303e;
}
.app { width: 46px; height: 47px; flex: none; position: relative; }
.app > svg { width: 46px; height: 47px; display: block; overflow: visible; }
.app > svg.mini { position: absolute; width: 19px; height: 19px; left: 31px; top: 31px; }
.app-big > svg { width: 50px; height: 50px; margin: -2px -2px 0; }
.app.run::after { content: ""; position: absolute; left: 21.500px; top: 57px; width: 3px; height: 3px; border-radius: 50%; background: #b9a6ac; }
.dock-sep { width: 1px; height: 53px; flex: none; background: #6a3a48; margin: -1px 6px 0; }
.badge { position: absolute; right: -8px; top: -6px; min-width: 21px; height: 21px; border-radius: 50%; background: #f0263c; color: #fff; font: 400 11px/21px Roboto, sans-serif; text-align: center; }
.logo-t { font: 700 14px "Liberation Mono", monospace; fill: #fff; }
.term-t { font: 11px "Liberation Mono", monospace; fill: #fff; }
```
